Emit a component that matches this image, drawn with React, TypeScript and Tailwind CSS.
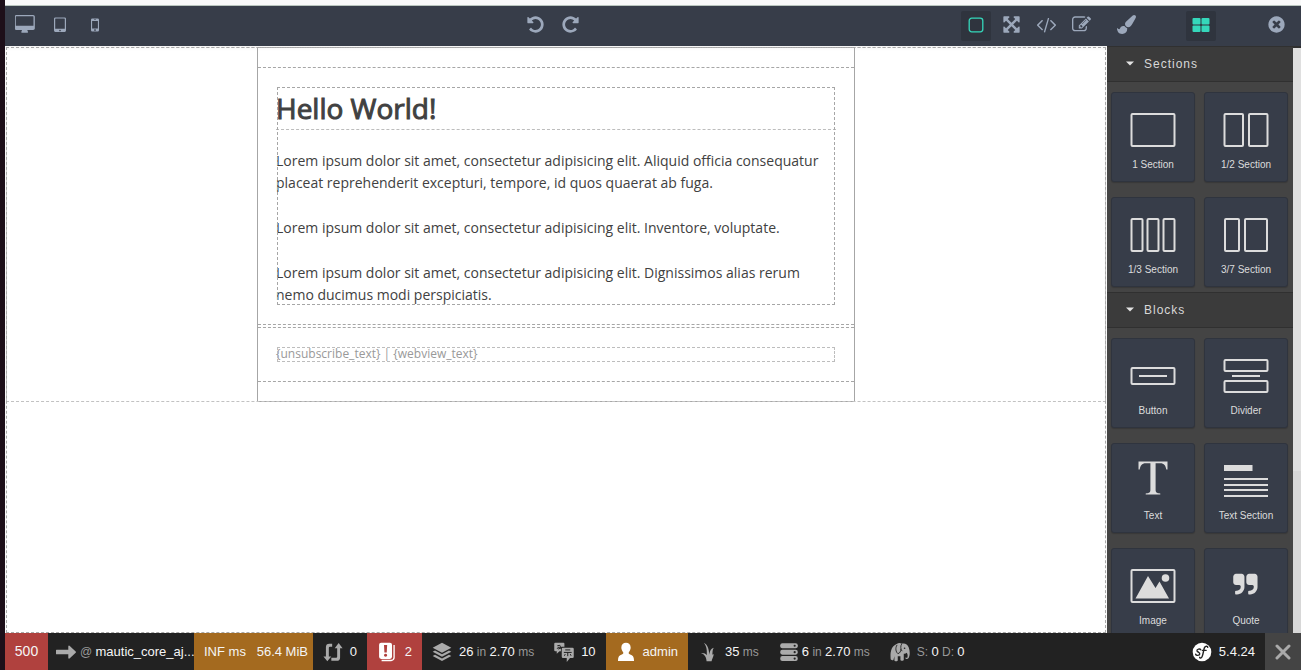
import type { ReactNode } from "react";

const FA = {
  desktop:
    "M1728 992v-832q0-13-9.5-22.5t-22.5-9.5h-1600q-13 0-22.5 9.5t-9.5 22.5v832q0 13 9.5 22.5t22.5 9.5h1600q13 0 22.5-9.5t9.5-22.5zm128-832v1088q0 66-47 113t-113 47h-544q0 37 16 77.5t32 71 16 43.5q0 26-19 45t-45 19h-512q-26 0-45-19t-19-45q0-14 16-44t32-70 16-78h-544q-66 0-113-47t-47-113v-1088q0-66 47-113t113-47h1600q66 0 113 47t47 113z",
  undo: "M1664 896q0 156-61 298t-164 245-245 164-298 61q-172 0-327-72.5t-264-204.5q-7-10-6.5-22.5t8.5-20.5l137-138q10-9 25-9 16 2 23 12 73 95 179 147t225 52q104 0 198.5-40.5t163.5-109.5 109.5-163.5 40.5-198.5-40.5-198.5-109.5-163.5-163.5-109.5-198.5-40.5q-98 0-188 35.5t-160 101.5l137 138q31 30 14 69-17 40-59 40h-448q-26 0-45-19t-19-45v-448q0-42 40-59 39-17 69 14l130 129q107-101 244.5-156.5t284.5-55.5q156 0 298 61t245 164 164 245 61 298z",
  arrows:
    "M1411 541l-355 355 355 355 144-144q29-31 70-14 39 17 39 59v448q0 26-19 45t-45 19h-448q-42 0-59-40-17-39 14-69l144-144-355-355-355 355 144 144q31 30 14 69-17 40-59 40h-448q-26 0-45-19t-19-45v-448q0-42 40-59 39-17 69 14l144 144 355-355-355-355-144 144q-19 19-45 19-12 0-24-5-40-17-40-59v-448q0-26 19-45t45-19h448q42 0 59 40 17 39-14 69l-144 144 355 355 355-355-144-144q-31-30-14-69 17-40 59-40h448q26 0 45 19t19 45v448q0 42-39 59-13 5-25 5-26 0-45-19z",
  code: "M553 1399l-50 50q-10 10-23 10t-23-10l-466-466q-10-10-10-23t10-23l466-466q10-10 23-10t23 10l50 50q10 10 10 23t-10 23l-393 393 393 393q10 10 10 23t-10 23zm591-1067l-373 1291q-4 13-15.5 19.5t-23.5 2.5l-62-17q-13-4-19.5-15.5t-2.5-24.5l373-1291q4-13 15.5-19.5t23.5-2.5l62 17q13 4 19.5 15.5t2.5 24.5zm657 651l-466 466q-10 10-23 10t-23-10l-50-50q-10-10-10-23t10-23l393-393-393-393q-10-10-10-23t10-23l50-50q10-10 23-10t23 10l466 466q10 10 10 23t-10 23z",
  edit: "M888 1184l116-116-152-152-116 116v56h96v96h56zm440-720q-16-16-33 1l-350 350q-17 17-1 33t33-1l350-350q17-17 1-33zm80 594v190q0 119-84.5 203.5t-203.5 84.5h-832q-119 0-203.5-84.5t-84.5-203.5v-832q0-119 84.5-203.5t203.5-84.5h832q63 0 117 25 15 7 18 23 3 17-9 29l-49 49q-14 14-32 8-23-6-45-6h-832q-66 0-113 47t-47 113v832q0 66 47 113t113 47h832q66 0 113-47t47-113v-126q0-13 9-22l64-64q15-15 35-7t20 29zm-96-738l288 288-672 672h-288v-288zm444 132l-92 92-288-288 92-92q28-28 68-28t68 28l152 152q28 28 28 68t-28 68z",
  brush:
    "M1615 0q70 0 122.5 46.5t52.5 116.5q0 63-45 151-332 629-465 752-97 91-218 91-126 0-216.5-92.5t-90.5-219.5q0-128 92-212l638-579q59-54 130-54zm-909 1034q39 76 106.5 130t150.5 76l1 71q4 213-129.5 347t-348.5 134q-123 0-218-46.5t-152.5-127.5-86.5-183-29-220q7 5 41 30t62 44.5 59 36.5 46 17q41 0 55-37 25-66 57.5-112.5t69.5-76 88-47.5 103-25.5 125-10.5z",
  close:
    "M1277 1122q0-26-19-45l-181-181 181-181q19-19 19-45 0-27-19-46l-90-90q-19-19-46-19-26 0-45 19l-181 181-181-181q-19-19-45-19-27 0-46 19l-90 90q-19 19-19 46 0 26 19 45l181 181-181 181q-19 19-19 45 0 27 19 46l90 90q19 19 46 19 26 0 45-19l181-181 181 181q19 19 45 19 27 0 46-19l90-90q19-19 19-46zm387-226q0 209-103 385.5t-279.5 279.5-385.5 103-385.5-103-279.5-279.5-103-385.5 103-385.5 279.5-279.5 385.5-103 385.5 103 279.5 279.5 103 385.5z",
};

function Glyph({ d, wide = false, flip = false }: { d: string; wide?: boolean; flip?: boolean }) {
  return (
    <svg
      viewBox={wide ? "0 0 1856 1792" : "0 0 1792 1792"}
      className={wide ? "h-[19px] w-5" : "h-[19px] w-[19px]"}
      fill="currentColor"
      aria-hidden="true"
    >
      <path d={d} transform={flip ? "translate(1792 0) scale(-1 1)" : undefined} />
    </svg>
  );
}

function Tool({ label, active = false, children }: { label: string; active?: boolean; children: ReactNode }) {
  return (
    <button
      type="button"
      aria-label={label}
      className={
        active
          ? "flex h-[30px] w-[30px] items-center justify-center rounded-xs bg-[#2f343e] pb-[3px] text-[#35d7bb]"
          : "flex h-[30px] w-[30px] items-center justify-center rounded-xs pb-[3px] text-[#9ca8bb]"
      }
    >
      {children}
    </button>
  );
}

function Toolbar() {
  return (
    <header className="grid h-10 shrink-0 grid-cols-3 items-center bg-[#373d49] pr-[10px] pl-[5px]">
      <div className="flex items-center gap-[5px]">
        <Tool label="Desktop">
          <Glyph d={FA.desktop} wide />
        </Tool>
        <Tool label="Tablet">
          <svg viewBox="0 0 12 16" className="h-4 w-3" aria-hidden="true">
            <path
              fill="currentColor"
              fillRule="evenodd"
              d="M1.5 .5h9A1.4 1.4 0 0 1 12 2v11.6a1.4 1.4 0 0 1-1.500 1.400h-9A1.400 1.400 0 0 1 0 13.600V2A1.400 1.400 0 0 1 1.500 .5zM1.600 1.600a.4.4 0 0 0-.4.4v9.800h9.600V2a.4.4 0 0 0-.4-.4zM6 12.700a.75.75 0 1 0 .01 0z"
            />
          </svg>
        </Tool>
        <Tool label="Mobile">
          <svg viewBox="0 0 8 14" className="h-[14px] w-2" aria-hidden="true">
            <path
              fill="currentColor"
              fillRule="evenodd"
              d="M1.300 .5h5.400A1.300 1.300 0 0 1 8 1.800v10.400a1.300 1.300 0 0 1-1.300 1.300H1.300A1.300 1.300 0 0 1 0 12.200V1.800A1.300 1.300 0 0 1 1.300 .5zM1.100 3.100v7.300h5.800V3.100zM3 1.500v.6h2v-.6zM4 11.200a.8.8 0 1 0 .01 0z"
            />
          </svg>
        </Tool>
      </div>
      <div className="flex items-center justify-center gap-[5px] pr-[196px]">
        <Tool label="Undo">
          <Glyph d={FA.undo} />
        </Tool>
        <Tool label="Redo">
          <Glyph d={FA.undo} flip />
        </Tool>
      </div>
      <div className="flex items-center justify-end gap-[5px]">
        <Tool label="View components" active>
          <svg viewBox="0 0 16 16" className="h-4 w-4" aria-hidden="true">
            <rect x="1.200" y="1.200" width="13.600" height="13.600" rx="2.500" fill="none" stroke="currentColor" strokeWidth="1.300" />
          </svg>
        </Tool>
        <Tool label="Fullscreen">
          <Glyph d={FA.arrows} />
        </Tool>
        <Tool label="View code">
          <Glyph d={FA.code} />
        </Tool>
        <Tool label="Edit code">
          <Glyph d={FA.edit} />
        </Tool>
        <div className="ml-[10px]">
          <Tool label="Style manager">
            <Glyph d={FA.brush} />
          </Tool>
        </div>
        <div className="ml-10">
          <Tool label="Blocks" active>
            <svg viewBox="0 0 18 16" className="h-4 w-[18px]" fill="currentColor" aria-hidden="true">
              <rect x="0.500" y="1" width="8" height="6.500" rx="1" />
              <rect x="9.500" y="1" width="8" height="6.500" rx="1" />
              <rect x="0.500" y="8.500" width="8" height="6.500" rx="1" />
              <rect x="9.500" y="8.500" width="8" height="6.500" rx="1" />
            </svg>
          </Tool>
        </div>
        <div className="ml-10">
          <Tool label="Close">
            <Glyph d={FA.close} />
          </Tool>
        </div>
      </div>
    </header>
  );
}

function Canvas() {
  return (
    <main className="min-w-0 flex-1 bg-white pt-px pl-px text-[#414141] shadow-[inset_0_2px_4px_#0000000d]">
      <div className="mr-px h-full outline-1 -outline-offset-1 outline-dashed outline-[#a8a8a8]">
        <div className="outline-1 -outline-offset-1 outline-dashed outline-[#c2c2c2]">
          <div className="mx-auto w-[598px] border border-[#a6a6a6] font-['Open_Sans',sans-serif]">
            <div className="h-5 border-b border-dashed border-[#a6a6a6]" />
            <section className="border-b border-dashed border-[#a6a6a6] p-[18px]">
              <div className="h-[220px] outline-1 -outline-offset-2 outline-dashed outline-[#a6a6a6]">
                <h1 className="h-11 border-b border-dashed border-[#bdbdbd] text-[28px] leading-[44px] font-normal [-webkit-text-stroke:1px_#414141]">
                  Hello World!
                </h1>
                <div className="flex flex-col gap-[23px] pt-5 text-[14px] leading-[22px]">
                  <p>
                    Lorem ipsum dolor sit amet, consectetur adipisicing elit. Aliquid officia consequatur
                    <br />
                    placeat reprehenderit excepturi, tempore, id quos quaerat ab fuga.
                  </p>
                  <p>Lorem ipsum dolor sit amet, consectetur adipisicing elit. Inventore, voluptate.</p>
                  <p>
                    Lorem ipsum dolor sit amet, consectetur adipisicing elit. Dignissimos alias rerum
                    <br />
                    nemo ducimus modi perspiciatis.
                  </p>
                </div>
              </div>
            </section>
            <section className="mt-[2px] border-y border-dashed border-[#a6a6a6] p-[18px]">
              <p className="h-[17px] text-[12px] leading-[15px] text-[#999] outline-1 -outline-offset-2 outline-dashed outline-[#bdbdbd]">
                {"{unsubscribe_text} | {webview_text}"}
              </p>
            </section>
            <div className="h-[19px]" />
          </div>
        </div>
      </div>
    </main>
  );
}

function BlockIcon({ children }: { children: ReactNode }) {
  return (
    <svg
      viewBox="0 0 46 36"
      className="h-9 w-[46px] shrink-0 overflow-visible"
      fill="none"
      stroke="#dcdcdc"
      strokeWidth="2"
      aria-hidden="true"
    >
      {children}
    </svg>
  );
}

const sections: [string, ReactNode][] = [
  ["1 Section", <rect x="1.500" y="2" width="43" height="32" rx="1" />],
  [
    "1/2 Section",
    <>
      <rect x="1.500" y="2" width="18.500" height="32" rx="1" />
      <rect x="26" y="2" width="18.500" height="32" rx="1" />
    </>,
  ],
  [
    "1/3 Section",
    <>
      <rect x="1.500" y="2" width="11" height="32" rx="1" />
      <rect x="17.500" y="2" width="11" height="32" rx="1" />
      <rect x="33.500" y="2" width="11" height="32" rx="1" />
    </>,
  ],
  [
    "3/7 Section",
    <>
      <rect x="2" y="2" width="14" height="32" rx="1" />
      <rect x="22" y="2" width="22" height="32" rx="1" />
    </>,
  ],
];

const quotePath =
  "M832 320v704q0 104-40.500 198.500t-109.500 163.500-163.500 109.500-198.500 40.500h-64q-26 0-45-19t-19-45v-128q0-26 19-45t45-19h64q106 0 181-75t75-181v-32q0-40-28-68t-68-28h-224q-80 0-136-56t-56-136v-384q0-80 56-136t136-56h384q80 0 136 56t56 136z";

const blocks: [string, ReactNode][] = [
  [
    "Button",
    <>
      <rect x="1.500" y="10" width="43" height="16" rx="1" />
      <path d="M9 18h28" />
    </>,
  ],
  [
    "Divider",
    <>
      <rect x="1.500" y="2" width="43" height="11" rx="1" />
      <path d="M9 18h28" />
      <rect x="1.500" y="23" width="43" height="11" rx="1" />
    </>,
  ],
  [
    "Text",
    <path
      fill="#dcdcdc"
      stroke="none"
      d="M8.500 -1.500h29v8h-1.200c-.6-4-2.200-6.300-6-6.300h-4.700v26.300c0 3 .9 3.600 4.700 4v1H15.700v-1c3.800-.4 4.700-1 4.700-4V.2h-4.700c-3.800 0-5.400 2.300-6 6.300H8.500z"
    />,
  ],
  [
    "Text Section",
    <>
      <path d="M1 5h28.500" strokeWidth="6" />
      <path d="M1 16h44M1 22h44M1 27h44M1 33h44" />
    </>,
  ],
  [
    "Image",
    <>
      <rect x="1.500" y="2" width="43" height="32" rx="1" />
      <path fill="#dcdcdc" stroke="none" d="M5.500 30.500 18 8l7.500 12 4-6.500L39 30.500z" />
      <circle cx="35.500" cy="10" r="3.800" fill="#dcdcdc" stroke="none" />
    </>,
  ],
  [
    "Quote",
    <g fill="#dcdcdc" stroke="none" transform="translate(9.300 4) scale(.0146)">
      <path d={quotePath} />
      <path d={quotePath} transform="translate(896 0)" />
    </g>,
  ],
];

function Category({ title, items }: { title: string; items: [string, ReactNode][] }) {
  return (
    <section>
      <button
        type="button"
        className="flex h-9 w-full items-center gap-[10px] border-y border-[#303030] bg-[#3b3b3b] pb-px pl-[19px] text-[12px] tracking-[1px] text-[#d8d8d8]"
      >
        <svg viewBox="0 0 8 5" className="h-[5px] w-2" fill="#e4e4e4" aria-hidden="true">
          <path d="M0 .5h8L4 4.500z" />
        </svg>
        {title}
      </button>
      <div className="grid grid-cols-2 gap-x-[9px] gap-y-[15px] pt-[10px] pr-[5px] pb-[5px] pl-1">
        {items.map(([label, icon]) => (
          <button
            key={label}
            type="button"
            className="flex h-[90px] flex-col items-center gap-[10px] rounded-[3px] border border-[#2f343e] bg-[#373d49] pt-[19px] text-[10px] leading-[14px] text-[#dcdcdc] shadow-[0_1px_1px_#0000002e]"
          >
            <BlockIcon>{icon}</BlockIcon>
            {label}
          </button>
        ))}
      </div>
    </section>
  );
}

function Sidebar() {
  return (
    <aside className="flex w-[194px] shrink-0 overflow-hidden bg-[#444] font-['Liberation_Sans',sans-serif]">
      <div className="flex-1">
        <Category title="Sections" items={sections} />
        <Category title="Blocks" items={blocks} />
      </div>
      <div className="flex w-2 flex-col bg-[#d7d7d7]">
        <div className="h-[2px] bg-[#303030]" />
        <div className="h-[423px] bg-[#dfdfdf]" />
      </div>
    </aside>
  );
}

function Item({ className, children }: { className: string; children: ReactNode }) {
  return <div className={`flex h-full shrink-0 items-center whitespace-nowrap ${className}`}>{children}</div>;
}

function BarIcon({ className = "w-5", children }: { className?: string; children: ReactNode }) {
  return (
    <svg viewBox="0 0 24 24" className={`h-5 shrink-0 ${className}`} fill="#aaa" aria-hidden="true">
      {children}
    </svg>
  );
}

function Metric({ children }: { children: ReactNode }) {
  return <span className="text-[12px] text-[#999]">{children}</span>;
}

function Val({ children }: { children: ReactNode }) {
  return <span className="text-[13px] text-[#f5f5f5]">{children}</span>;
}

function DebugBar() {
  return (
    <footer className="flex h-[37px] shrink-0 items-center bg-[#222] font-['Liberation_Sans',sans-serif] text-[13px] text-[#f5f5f5]">
      <Item className="w-[43px] justify-center bg-[#b0413e] text-[14px]">500</Item>
      <Item className="w-[146px] gap-1 pl-2">
        <svg viewBox="0 0 20 14" className="h-[14px] w-5 shrink-0" fill="#aaa" aria-hidden="true">
          <path d="M.5 4.800Q0 4.800 0 5.300v3.400q0 .5.500.5h11.800v3.800q.3 1 1.200.5l6.200-5.700q.5-.6 0-1.200L13.500.7q-.9-.5-1.200.5v3.600z" />
        </svg>
        <Metric>
          @ <Val>mautic_core_aj...</Val>
        </Metric>
      </Item>
      <Item className="w-[119px] justify-between bg-[#a46a1f] pr-[5px] pl-[10px]">
        <span>INF ms</span>
        <span>56.4 MiB</span>
      </Item>
      <Item className="w-[54px] justify-between px-[10px]">
        <BarIcon>
          <path d="M11 2H7.500Q3.500 2 3.500 6v11.500H.5l4.700 5.700 4.700-5.700H7V7q0-1.300 1.300-1.300H11zM10 22.500h6.500q4 0 4-4V7.500h3L18.800 1.200l-4.700 6.300H17v10.200q0 1.300-1.300 1.300H10z" />
        </BarIcon>
        <span>0</span>
      </Item>
      <Item className="w-[55px] justify-between bg-[#b0413e] px-[10px]">
        <BarIcon>
          <path fill="#fff" d="M5 .8h10.500A2.500 2.500 0 0 1 18 3.300v14.500a2.500 2.500 0 0 1-2.500 2.500H5a2.500 2.500 0 0 1-2.500-2.500V3.300A2.500 2.500 0 0 1 5 .8z" />
          <path fill="none" stroke="#fff" strokeWidth="1.600" d="M20.500 3.500v15.200a3.500 3.500 0 0 1-3.500 3.500H5.500" />
          <path fill="#b0413e" d="M8.400 3.500h3.800l-.5 9H8.900zM10.300 14a1.900 1.900 0 1 0 .01 0z" />
        </BarIcon>
        <span>2</span>
      </Item>
      <Item className="gap-[7px] px-[10px]">
        <BarIcon>
          <path d="M12 1 .8 7 12 13l11.200-6zM3.600 10.200.8 11.700 12 17.700l11.200-6-2.800-1.500L12 14.700zM3.600 15.300.8 16.800 12 22.800l11.200-6-2.800-1.500L12 19.800z" />
        </BarIcon>
        <Metric>
          <Val>26</Val> in <Val>2.70</Val> ms
        </Metric>
      </Item>
      <Item className="gap-[7px] px-[10px]">
        <BarIcon>
          <path d="M1.500 1h9.800q1.200 0 1.200 1.200v3.600H9.800Q8.300 5.800 8.300 7.300v3.900H6.600L3.300 14v-2.800H1.500Q.3 11.200.3 10V2.200Q.3 1 1.500 1z" />
          <path d="M10.800 6.800h11.400q1.500 0 1.500 1.500v9.300q0 1.500-1.500 1.500h-3L15.300 24v-4.900h-4.500q-1.500 0-1.500-1.500V8.300q0-1.500 1.500-1.500z" />
          <path fill="none" stroke="#222" strokeWidth="1.200" d="M4 4.500q4-1.500 4 1V8M8 6.200q-4-.2-4 1.400 1 1.500 4-.3M13.500 9.500h6M11.800 12.500h9.400M16.500 12.500V17M13.500 14.500l-1 2M19.500 14.500l1 2" />
        </BarIcon>
        <span>10</span>
      </Item>
      <Item className="gap-[7px] bg-[#a46a1f] px-[10px]">
        <BarIcon>
          <path fill="#fff" d="M12 1c3.300 0 5.600 2.300 5.600 5.700 0 2-.8 3.800-2 5.300-.9 1.200-.3 2.500 1.400 3.100 3 .9 4.600 2.600 4.600 6.900v.8H2.400V22c0-4.300 1.600-6 4.600-6.900 1.700-.6 2.300-1.900 1.400-3.100-1.200-1.500-2-3.300-2-5.300C6.400 3.300 8.700 1 12 1z" />
        </BarIcon>
        <span>admin</span>
      </Item>
      <Item className="gap-[7px] px-[10px]">
        <BarIcon>
          <path d="M7 1c5 2.500 6.300 9 6.500 14 .8-4.600 2.300-7.500 5.500-8-1.500 1.500-1.500 4.500-1.700 7.500.3 1.200.7.800 1.700-.5-.4 4-2.500 6.500-2.700 9h-6c-.3-4.500-2-8-7-9.700 3-.6 5.700.2 7.200 2.700.3-5.500.2-10.500-3.500-15z" />
        </BarIcon>
        <Metric>
          <Val>35</Val> ms
        </Metric>
      </Item>
      <Item className="gap-[3px] px-[10px]">
        <BarIcon>
          <rect x="1.500" y="1.500" width="21" height="6" rx="2.500" />
          <rect x="1.500" y="9.200" width="21" height="6" rx="2.500" />
          <rect x="1.500" y="16.900" width="21" height="6" rx="2.500" />
          <g fill="#222">
            <circle cx="18.800" cy="4.500" r="1.300" />
            <circle cx="18.800" cy="12.200" r="1.300" />
            <circle cx="18.800" cy="19.900" r="1.300" />
          </g>
        </BarIcon>
        <Metric>
          <Val>6</Val> in <Val>2.70</Val> ms
        </Metric>
      </Item>
      <Item className="gap-[7px] px-[10px]">
        <BarIcon>
          <path d="M8 2.500c2-1.500 4.500-1.500 6-.3 3.500-1.200 7 .3 8.500 4.300 1.500 4 1.700 9.500-.2 12.700-1.300 2-3.700 1.600-4-.3l1.200-.3c.5 1 1.300.6 1.500-.6.4-2 .1-4-1-5.200-1 1.200-2.300 1.500-3.500 1.200v7.500c0 1.200-4 1.200-4 0v-4.300H9.300v5c0 1.200-4 1.200-4 0V17l-1.200 4.500c-1 .8-3.300.2-3.300-1C.2 13.500.8 5.500 8 2.500z" />
          <path fill="none" stroke="#222" strokeWidth="1.100" d="M8.500 3.500c-2.500 4-1.500 8.500 1 10.500 2.500-.5 3.500-3 3.500-5.500M14 2.500c-1.500 2-1.500 6 .5 8.500" />
          <circle cx="17.500" cy="7.500" r="1" fill="#222" />
        </BarIcon>
        <Metric>
          S: <Val>0</Val> D: <Val>0</Val>
        </Metric>
      </Item>
      <Item className="ml-auto gap-[7px] pr-[10px]">
        <svg viewBox="0 0 24 24" className="h-5 w-5" aria-hidden="true">
          <circle cx="12" cy="12" r="11.200" fill="#fff" />
          <path
            fill="none"
            stroke="#222"
            strokeWidth="1.700"
            strokeLinecap="round"
            d="M10.500 9.300C9.600 7.600 5.600 8.500 6 10.500c.4 1.600 3.500 1.700 3.300 3.700-.3 2.300-4.500 2.400-4.900.5M18.800 6.400c.1-1.600-2.500-2-3.700.1-1.400 2.600-1.500 8.500-3.200 11.500-.8 1.400-2.500 1.600-2.700.4M12.500 10h4.500"
          />
        </svg>
        <span>5.4.24</span>
      </Item>
      <button type="button" aria-label="Close toolbar" className="flex h-full w-9 items-center justify-center bg-[#444]">
        <svg viewBox="0 0 16 16" className="h-4 w-4" stroke="#aaa" strokeWidth="3" strokeLinecap="round" aria-hidden="true">
          <path d="m2 2 12 12M14 2 2 14" />
        </svg>
      </button>
    </footer>
  );
}

export default function App() {
  return (
    <div className="flex h-screen flex-col overflow-hidden border-l-[5px] border-[#1d0f19] bg-white">
      <div className="h-[6px] shrink-0 border-b border-[#b9c5be] bg-[#f9f9f9]" />
      <Toolbar />
      <div className="flex min-h-0 flex-1">
        <Canvas />
        <Sidebar />
      </div>
      <DebugBar />
    </div>
  );
}
